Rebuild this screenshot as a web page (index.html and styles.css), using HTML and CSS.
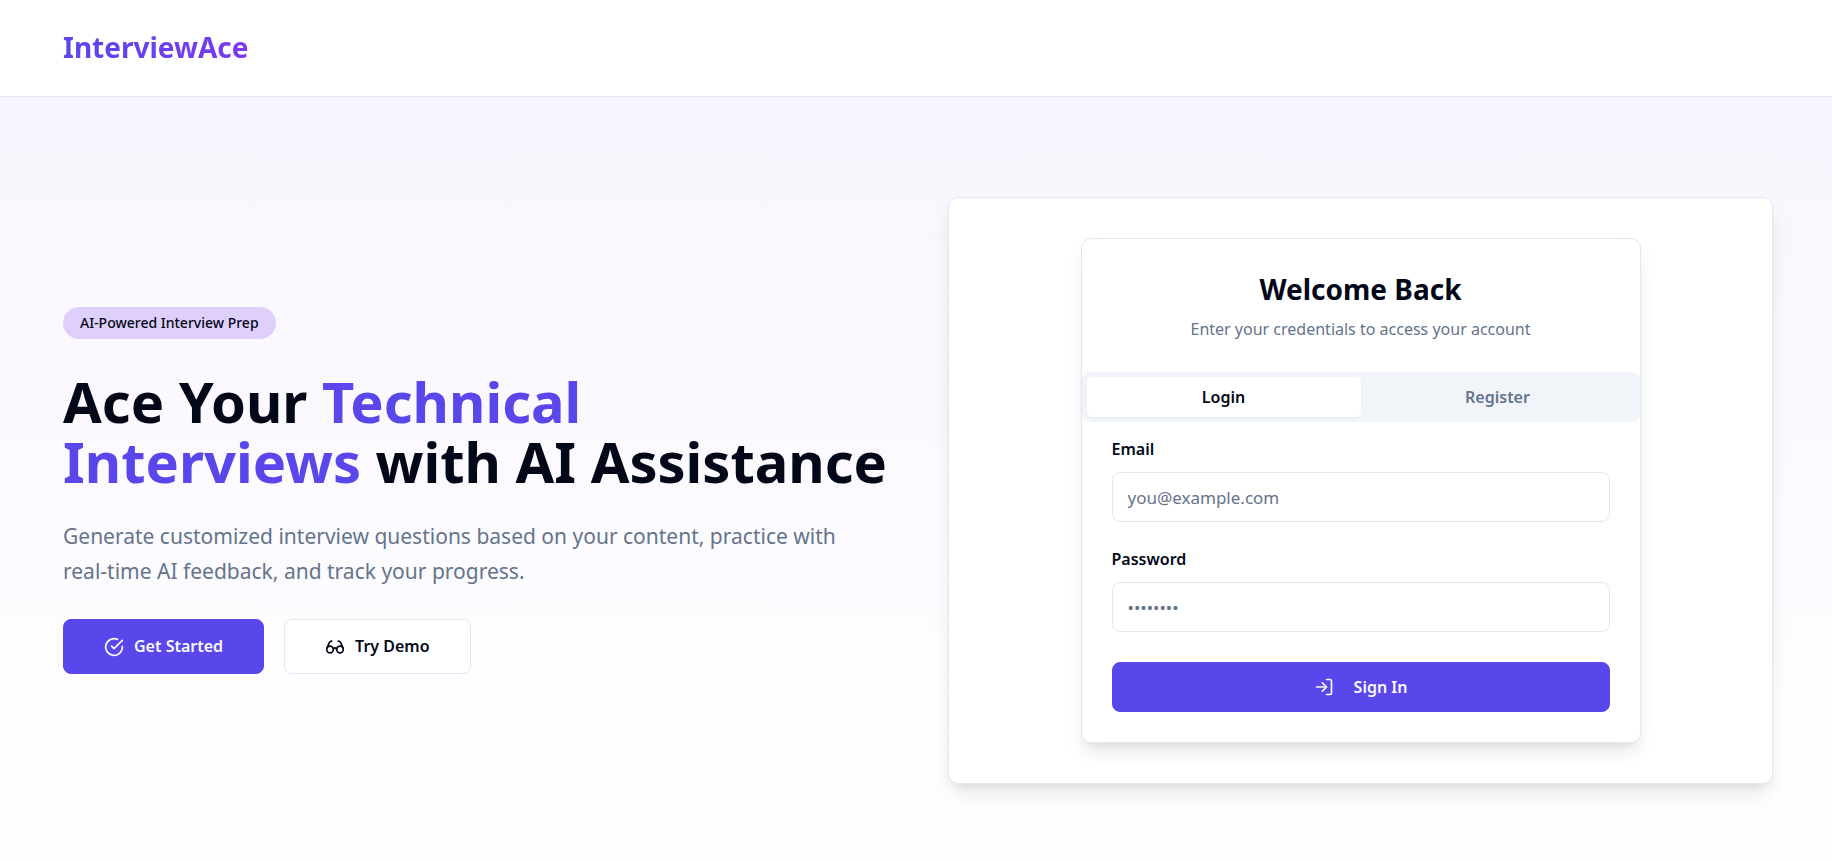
FILE: index.html
```html
<!DOCTYPE html>
<html lang="en">
<head>
  <meta charset="utf-8">
  <meta name="viewport" content="width=device-width, initial-scale=1">
  <title>InterviewAce</title>
  <link rel="stylesheet" href="styles.css">
</head>
<body>
  <header class="site-header">
    <a class="logo" href="#">InterviewAce</a>
  </header>

  <main class="hero">
    <section class="intro">
      <span class="badge">AI-Powered Interview Prep</span>
      <h1 class="headline">Ace Your <span class="highlight">Technical<br>Interviews</span> with AI Assistance</h1>
      <p class="lead">Generate customized interview questions based on your content, practice with real-time AI feedback, and track your progress.</p>
      <div class="actions">
        <button class="button button-primary button-large" type="button">
          <svg class="icon" viewBox="0 0 24 24" aria-hidden="true"><path d="M22 11.08V12a10 10 0 1 1-5.93-9.14"/><path d="m9 11 3 3L22 4"/></svg>
          Get Started
        </button>
        <button class="button button-outline button-large" type="button">
          <svg class="icon" viewBox="0 0 24 24" aria-hidden="true"><circle cx="6" cy="15" r="4"/><circle cx="18" cy="15" r="4"/><path d="M14 15a2 2 0 0 0-2-2 2 2 0 0 0-2 2"/><path d="M2.5 13 5 7c.7-1.3 1.4-2 3-2"/><path d="M21.5 13 19 7c-.7-1.3-1.5-2-3-2"/></svg>
          Try Demo
        </button>
      </div>
    </section>

    <section class="panel">
      <div class="auth-card">
        <div class="auth-header">
          <h2 class="auth-title">Welcome Back</h2>
          <p class="auth-text">Enter your credentials to access your account</p>
        </div>
        <div class="tabs" role="tablist">
          <button class="tab tab-active" type="button" role="tab" aria-selected="true">Login</button>
          <button class="tab" type="button" role="tab" aria-selected="false">Register</button>
        </div>
        <form class="auth-form">
          <div class="field">
            <label class="label" for="email">Email</label>
            <input class="input" id="email" type="email" placeholder="you@example.com">
          </div>
          <div class="field">
            <label class="label" for="password">Password</label>
            <input class="input" id="password" type="password" placeholder="••••••••">
          </div>
          <button class="button button-primary button-submit" type="submit">
            <svg class="icon" viewBox="0 0 24 24" aria-hidden="true"><path d="M15 3h4a2 2 0 0 1 2 2v14a2 2 0 0 1-2 2h-4"/><path d="m10 17 5-5-5-5"/><path d="M15 12H3"/></svg>
            Sign In
          </button>
        </form>
      </div>
    </section>
  </main>
</body>
</html>
```
FILE: styles.css
```css
:root {
  --primary: #5947eb;
  --accent: #7c3aed;
  --ink: #020817;
  --muted: #64748b;
  --border: #e2e8f0;
  --shadow: 0 12px 19px -4px rgb(0 0 0 / 0.1), 0 5px 8px -5px rgb(0 0 0 / 0.1);
}

* {
  box-sizing: border-box;
}

body {
  display: flex;
  flex-direction: column;
  min-height: 100vh;
  margin: 0;
  background: #fff;
  color: var(--ink);
  font: 16px/25px "Segoe UI", "Noto Sans", sans-serif;
}

h1, h2, p {
  margin: 0;
}

button, input {
  font: inherit;
}

.site-header {
  display: flex;
  padding: 27px 59px 29px 63px;
  border-bottom: 1px solid var(--border);
}

.logo {
  background: linear-gradient(to right, var(--primary), var(--accent));
  background-clip: text;
  color: transparent;
  font-size: 28px;
  font-weight: 700;
  line-height: 40px;
  text-decoration: none;
}

.hero {
  flex: 1;
  display: grid;
  grid-template-columns: repeat(2, minmax(0, 1fr));
  gap: 60px;
  align-items: center;
  align-content: start;
  padding: 100px 59px 40px 63px;
  background: linear-gradient(to bottom, #f8f5fe, #fff 103%);
}

.intro {
  display: flex;
  flex-direction: column;
  align-items: flex-start;
}

.badge {
  margin-bottom: 32px;
  padding: 4px 17px;
  border-radius: 16px;
  background: #dfd0fb;
  font-size: 14px;
  font-weight: 500;
  line-height: 24px;
}

.headline {
  margin-bottom: 28px;
  font-size: 56px;
  font-weight: 700;
  line-height: 60px;
}

.highlight {
  color: var(--primary);
}

.lead {
  max-width: 800px;
  margin-bottom: 30px;
  color: var(--muted);
  font-size: 21px;
  line-height: 35px;
}

.actions {
  display: flex;
  gap: 20px;
}

.button {
  display: inline-flex;
  align-items: center;
  justify-content: center;
  gap: 10px;
  border: 1px solid transparent;
  border-radius: 8px;
  font-weight: 600;
}

.button-large {
  height: 55px;
  padding: 0 40px;
}

.button-primary {
  border-color: var(--primary);
  background: var(--primary);
  color: #f8fafc;
}

.button-outline {
  border-color: var(--border);
  background: #fff;
  color: var(--ink);
}

.button-submit {
  height: 50px;
  gap: 20px;
  margin-top: 5px;
}

.icon {
  width: 20px;
  height: 20px;
  fill: none;
  stroke: currentColor;
  stroke-width: 2;
  stroke-linecap: round;
  stroke-linejoin: round;
}

.panel {
  padding: 40px;
  border: 1px solid var(--border);
  border-radius: 10px;
  background: #fff;
  box-shadow: var(--shadow);
}

.auth-card {
  max-width: 560px;
  margin: 0 auto;
  border: 1px solid var(--border);
  border-radius: 10px;
  background: #fff;
  box-shadow: var(--shadow);
}

.auth-header {
  display: grid;
  gap: 8px;
  padding: 30px;
  text-align: center;
}

.auth-title {
  font-size: 28px;
  font-weight: 700;
  line-height: 40px;
}

.auth-text {
  color: var(--muted);
}

.tabs {
  display: grid;
  grid-template-columns: 1fr 1fr;
  padding: 5px;
  border-radius: 8px;
  background: #f1f5f9;
}

.tab {
  height: 40px;
  padding: 0;
  border: 0;
  border-radius: 5px;
  background: transparent;
  color: var(--muted);
  font-weight: 600;
}

.tab-active {
  background: #fff;
  color: var(--ink);
  box-shadow: 0 1px 2px rgb(0 0 0 / 0.05);
}

.auth-form {
  display: grid;
  gap: 25px;
  padding: 15px 30px 30px;
}

.field {
  display: grid;
  gap: 10px;
}

.label {
  font-weight: 600;
}

.input {
  width: 100%;
  height: 50px;
  padding: 0 15px;
  border: 1px solid var(--border);
  border-radius: 8px;
  background: #fff;
  color: var(--ink);
  font-size: 17px;
}

.input::placeholder {
  color: var(--muted);
  opacity: 1;
}
```
